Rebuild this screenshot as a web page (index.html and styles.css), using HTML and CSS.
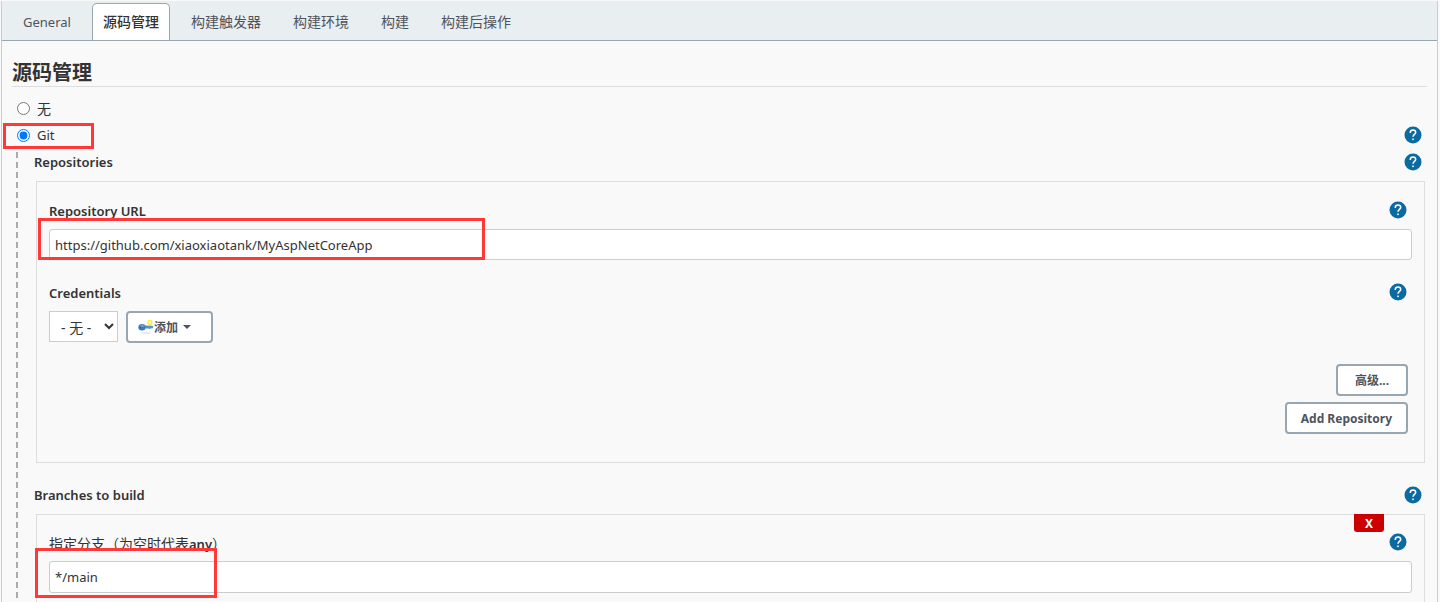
FILE: index.html
```
<!DOCTYPE html>
<html lang="zh-CN">
<head>
	<meta charset="UTF-8">
	<title>源码管理</title>
	<link rel="stylesheet" href="styles.css">
</head>
<body>
	<svg width="0" height="0" class="defs" aria-hidden="true">
		<symbol id="help" viewBox="0 0 18 18">
			<circle cx="9" cy="9" r="8.500" fill="#0b6aa2"/>
			<path d="M6.300 7V6.500a2.700 2.500 0 0 1 5.400 0c0 1.900-2.700 2-2.700 4.300" fill="none" stroke="#fff" stroke-width="1.500"/>
			<rect x="8.200" y="12.500" width="1.600" height="1.600" fill="#fff"/>
		</symbol>
	</svg>
	<div class="page">
		<nav class="tabs">
			<a class="tab latin" href="#">General</a>
			<a class="tab active" href="#">源码管理</a>
			<a class="tab" href="#">构建触发器</a>
			<a class="tab" href="#">构建环境</a>
			<a class="tab" href="#">构建</a>
			<a class="tab" href="#">构建后操作</a>
		</nav>
		<form class="config">
			<h2>源码管理</h2>
			<div class="row radio">
				<input type="radio" name="scm" id="scm-none">
				<label for="scm-none" class="cjk">无</label>
			</div>
			<div class="row radio">
				<input type="radio" name="scm" id="scm-git" checked>
				<label for="scm-git">Git</label>
				<a class="help" href="#" aria-label="Git"><svg><use href="#help"/></svg></a>
				<span class="mark mark-git"></span>
			</div>
			<div class="git">
				<div class="row name">
					<span>Repositories</span>
					<a class="help" href="#" aria-label="Repositories"><svg><use href="#help"/></svg></a>
				</div>
				<div class="panel">
					<div class="row">
						<label for="url">Repository URL</label>
						<a class="help" href="#" aria-label="Repository URL"><svg><use href="#help"/></svg></a>
					</div>
					<div class="field">
						<input type="text" class="text" id="url" value="https://github.com/xiaoxiaotank/MyAspNetCoreApp">
						<span class="mark mark-url"></span>
					</div>
					<div class="row">
						<label for="credentials">Credentials</label>
						<a class="help" href="#" aria-label="Credentials"><svg><use href="#help"/></svg></a>
					</div>
					<div class="credentials">
						<select id="credentials">
							<option>- 无 -</option>
						</select>
						<button type="button" class="btn add">
							<svg class="key" viewBox="0 0 16 16">
								<ellipse cx="8" cy="14" rx="5.500" ry=".8" fill="#e2e2e2"/>
								<circle cx="12" cy="3.500" r="1.900" fill="#fffde0" stroke="#f9ec4a" stroke-width="1.500"/>
								<path d="M6 6.600l8.500.2 1 1-1.200 1.800-1.300-.4-1.200.8-1.500-.6-4.300.2z" fill="#5d8fc9"/>
								<ellipse cx="4" cy="8.200" rx="3.600" ry="3.300" fill="#3f78b8"/>
								<ellipse cx="4.300" cy="6.800" rx="2.400" ry="1.200" fill="#6b9bd2"/>
								<circle cx="2.300" cy="8.300" r=".6" fill="#244d80"/>
							</svg>
							<span>添加</span>
							<i class="caret"></i>
						</button>
					</div>
					<div class="actions">
						<button type="button" class="btn">高级...</button>
						<button type="button" class="btn">Add Repository</button>
					</div>
				</div>
				<div class="row name">
					<span>Branches to build</span>
					<a class="help" href="#" aria-label="Branches to build"><svg><use href="#help"/></svg></a>
				</div>
				<div class="panel last">
					<button type="button" class="delete">X</button>
					<div class="row">
						<label for="branch" class="cjk">指定分支（为空时代表<b>any</b>）</label>
						<a class="help" href="#" aria-label="指定分支"><svg><use href="#help"/></svg></a>
					</div>
					<div class="field">
						<input type="text" class="text" id="branch" value="*/main">
						<span class="mark mark-branch"></span>
					</div>
				</div>
			</div>
		</form>
	</div>
</body>
</html>
```

FILE: styles.css
```
* {
	box-sizing: border-box;
}

body {
	margin: 0;
	background: #f9f9f9;
	color: #333;
	font: 13px/27px "Noto Sans", "Noto Sans CJK SC", sans-serif;
}

.defs {
	position: absolute;
}

.page {
	margin: 1px 2px 0 1px;
	border: solid #ccc;
	border-width: 0 1px;
}

/* tabs */
.tabs {
	display: flex;
	gap: 10px;
	height: 40px;
	padding: 2px 10px 0;
	background: #e9eef1;
	border-bottom: 1px solid #98a6b1;
}
.tab {
	height: 37px;
	padding: 0 10px;
	border: 1px solid transparent;
	border-bottom: none;
	border-radius: 5px 5px 0 0;
	color: #4d545d;
	font-size: 14px;
	line-height: 36px;
	text-decoration: none;
}
.tab.latin {
	font-size: 13px;
}
.tab.active {
	background: #fff;
	border-color: #98a6b1;
	color: #333;
	font-weight: 500;
}

/* form */
.config {
	padding: 16px 10px 0;
}
h2 {
	margin: 0 0 8px;
	height: 30px;
	border-bottom: 1px solid #ddd;
	font-size: 20px;
	line-height: 32px;
}
.row {
	position: relative;
	display: flex;
	align-items: center;
	height: 27px;
	font-weight: 600;
}
.cjk {
	font-size: 14px;
	font-weight: 400;
}
.cjk b {
	font-size: 13px;
	font-weight: 600;
}
.radio {
	padding: 0 5px;
	font-weight: 400;
}
.radio input {
	width: 13px;
	height: 13px;
	margin: 0 7px 0 0;
}
.help {
	display: flex;
	margin: 0 0 2px auto;
}
.help svg {
	width: 18px;
	height: 18px;
}

.git {
	margin-left: 4px;
	padding: 0 2px 0 18px;
	background: repeating-linear-gradient(#aaa 0 6px, transparent 6px 10px) 0 3px / 2px 100% no-repeat;
}
.name {
	padding-right: 3px;
}
.panel {
	position: relative;
	margin: 5px 0 19px 2px;
	padding: 16px 12px 28px;
	border: 1px solid #ddd;
}
.panel.last {
	margin-bottom: 0;
	padding: 15px 12px 9px;
	border-bottom: none;
}
.panel .help {
	margin: 0 5px 4px auto;
}
.field {
	position: relative;
	margin: 4px 0 20px;
}
.last .field {
	margin-bottom: 0;
}
.text {
	display: block;
	width: 100%;
	height: 31px;
	padding: 0 5px;
	border: 1px solid #ccc;
	border-radius: 3px;
	background: #fff;
	color: #333;
	font: inherit;
}
.last .text {
	height: 32px;
}

.credentials {
	display: flex;
	gap: 8px;
	margin: 4px 0 21px;
}
select {
	width: 69px;
	height: 31px;
	padding: 2px 0 0 7px;
	border: 1px solid #ccc;
	border-radius: 0;
	background: #fff;
	color: #333;
	font: 14px "Noto Sans", "Noto Sans CJK SC", sans-serif;
}
.btn {
	min-width: 72px;
	height: 32px;
	padding: 0 14px;
	border: 2px solid #98a6b1;
	border-radius: 4px;
	background: #fff;
	color: #4d545d;
	font: bold 12px "Noto Sans", "Noto Sans CJK SC", sans-serif;
}
.add {
	display: flex;
	align-items: center;
	padding: 0 20px 0 10px;
}
.key {
	width: 16px;
	height: 16px;
}
.caret {
	margin-left: 5px;
	border: 4px solid transparent;
	border-top-color: #4d545d;
	border-bottom: none;
}
.actions {
	display: flex;
	flex-direction: column;
	align-items: flex-end;
	gap: 6px;
	padding-right: 4px;
}
.delete {
	position: absolute;
	top: -1px;
	right: 40px;
	width: 30px;
	height: 18px;
	padding: 0;
	border: none;
	border-radius: 0 0 3px 3px;
	background: #c00;
	color: #fff;
	font: bold 12px "Noto Sans", sans-serif;
}

/* red marks over the values to fill in */
.mark {
	position: absolute;
	z-index: 2;
	border: 3px solid #ff3838;
	pointer-events: none;
}
.mark-git {
	top: 1px;
	left: -9px;
	width: 91px;
	height: 26px;
}
.mark-url {
	top: -11px;
	left: -11px;
	width: 447px;
	height: 42px;
}
.mark-branch {
	top: -13px;
	left: -14px;
	width: 182px;
	height: 50px;
}
```
